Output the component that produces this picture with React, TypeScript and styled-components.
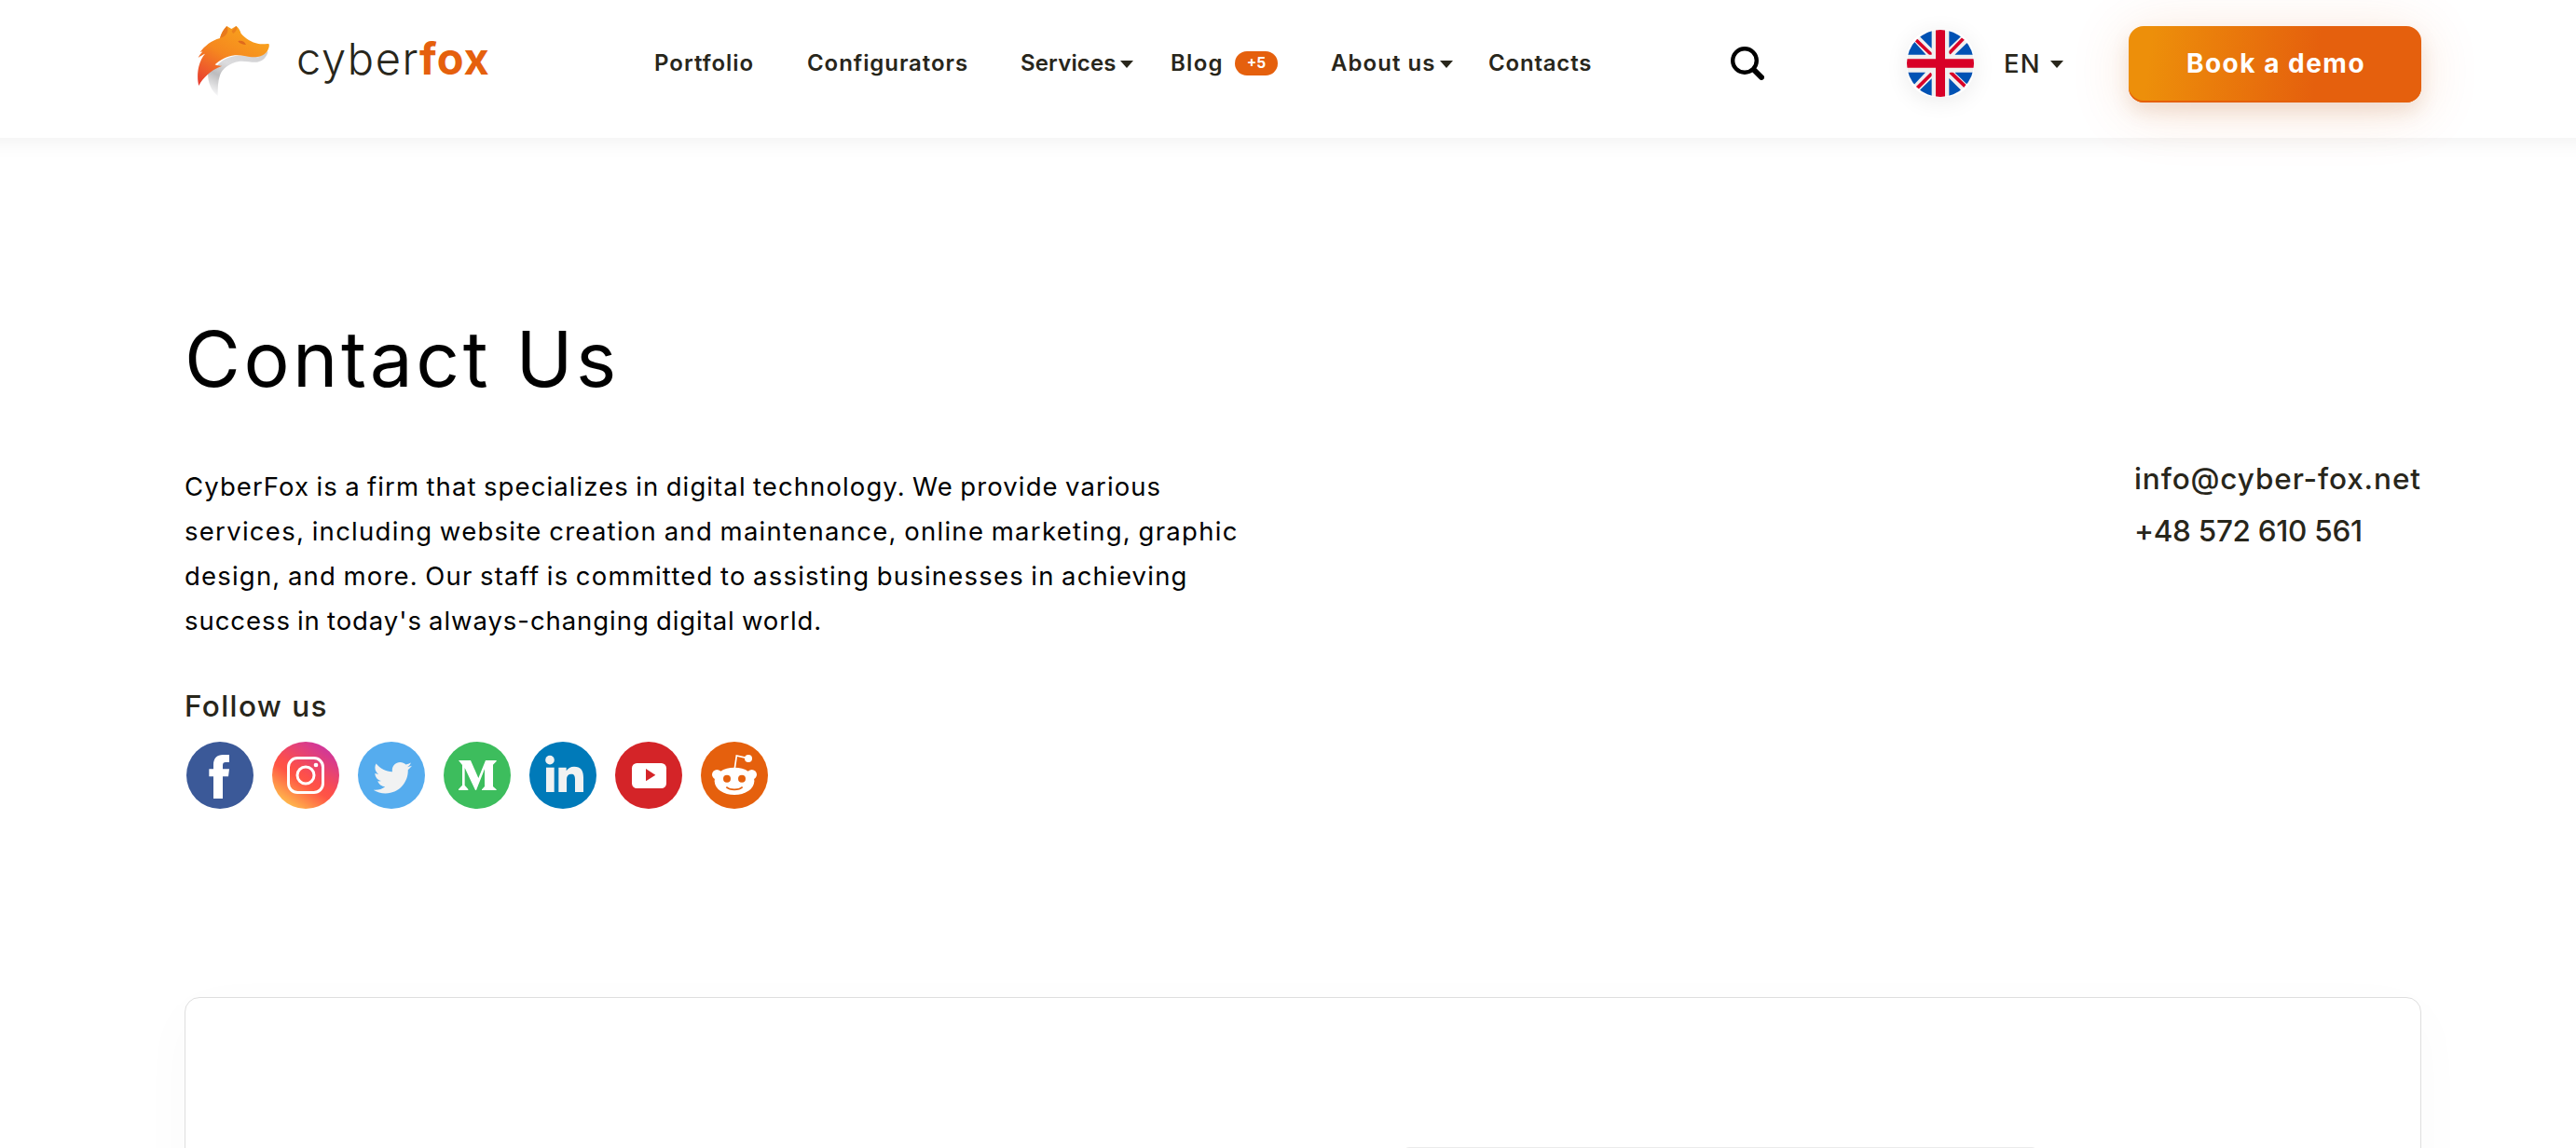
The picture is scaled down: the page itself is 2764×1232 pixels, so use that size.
import React from "react";
import styled, { createGlobalStyle } from "styled-components";
import { FaTwitter } from "react-icons/fa";

const GlobalStyle = createGlobalStyle`
  *, *::before, *::after { box-sizing: border-box; }
  body {
    margin: 0;
    background: #fff;
    color: #28261b;
    font-family: Inter, "Liberation Sans", sans-serif;
    overflow: hidden;
  }
`;

const Page = styled.div`
  height: 1232px;
  overflow: hidden;
`;

const Header = styled.header`
  height: 148px;
  margin: 0 -30px;
  padding: 0 196px 12px 240px;
  display: flex;
  align-items: center;
  box-shadow: 0 4px 20px rgba(0, 0, 0, 0.06);
`;

const Logo = styled.a`
  width: 492px;
  display: flex;
  align-items: center;
  gap: 28px;
  margin-top: -6px;
`;

const Wordmark = styled.span`
  margin-top: -4px;
  font-size: 47px;
  line-height: 60px;
  font-weight: 350;
  letter-spacing: 1.6px;
  white-space: nowrap;
`;

const WordmarkAccent = styled.b`
  font-weight: 700;
  color: #e5600d;
  letter-spacing: 0.9px;
`;

const Nav = styled.nav`
  width: 1155px;
  display: flex;
  align-items: center;
`;

const NavItem = styled.a<{ $width: number; $spacing: number }>`
  width: ${(p) => p.$width}px;
  display: flex;
  align-items: center;
  font-size: 24px;
  line-height: 30px;
  font-weight: 600;
  letter-spacing: ${(p) => p.$spacing}px;
  white-space: nowrap;
`;

const Caret = styled.i<{ $gap: number }>`
  margin-left: ${(p) => p.$gap}px;
  margin-top: 2px;
  border: 7px solid transparent;
  border-top: 8px solid #28261b;
  border-bottom: 0;
`;

const Badge = styled.span`
  width: 46px;
  height: 26px;
  margin-left: 12px;
  border-radius: 13px;
  display: flex;
  align-items: center;
  justify-content: center;
  background: #e5600d;
  color: #fff;
  font-size: 15.5px;
  line-height: 26px;
  font-weight: 700;
  letter-spacing: 0;
`;

const SearchButton = styled.button`
  width: 36px;
  height: 36px;
  padding: 0;
  border: 0;
  background: none;
  display: block;
`;

const Language = styled.div`
  margin-left: 153px;
  width: 238px;
  display: flex;
  align-items: center;
  font-size: 27.5px;
  line-height: 34px;
  font-weight: 500;
  letter-spacing: 1.1px;
`;

const FlagFrame = styled.span`
  width: 72px;
  height: 72px;
  margin-right: 32px;
  border-radius: 30px;
  background: #fff;
  box-shadow: 0 4px 24px rgba(0, 0, 0, 0.08);
  svg { display: block; }
`;

const DemoButton = styled.a`
  width: 314px;
  height: 82px;
  margin-top: 2px;
  border-radius: 16px;
  display: flex;
  align-items: center;
  justify-content: center;
  padding: 0 0 2px 2px;
  background: linear-gradient(97deg, #ed8f0a 8%, #e5600d 64%);
  box-shadow: inset 0 -2px 0 #e5600d, 0 10px 20px rgba(150, 75, 20, 0.13),
    0 8px 64px rgba(229, 96, 13, 0.16);
  color: #fff;
  font-size: 28px;
  line-height: 34px;
  font-weight: 700;
  letter-spacing: 1.5px;
  white-space: nowrap;
`;

const Main = styled.main`
  width: 2400px;
  margin-left: 198px;
`;

const Title = styled.h1`
  margin: 0;
  padding-top: 188px;
  font-size: 82px;
  line-height: 100px;
  font-weight: 400;
  letter-spacing: 3.5px;
  color: #000;
`;

const Intro = styled.section`
  display: flex;
  justify-content: space-between;
  align-items: flex-start;
`;

const About = styled.div`
  width: 1180px;
  padding-top: 62px;
`;

const Paragraph = styled.p`
  margin: 0;
  font-size: 27.5px;
  line-height: 48px;
  word-spacing: -1.5px;
  color: #000;
`;

const Line = styled.span<{ $spacing: number }>`
  display: block;
  white-space: nowrap;
  letter-spacing: ${(p) => p.$spacing}px;
`;

const FollowTitle = styled.h2`
  margin: 46px 0 0;
  font-size: 31.5px;
  line-height: 44px;
  font-weight: 500;
  letter-spacing: 1.4px;
`;

const SocialList = styled.div`
  margin: 16px 0 0 2px;
  display: flex;
  gap: 20px;
  svg { display: block; }
`;

const ContactList = styled.address`
  width: 308px;
  padding-top: 50px;
  font-style: normal;
  font-size: 31.5px;
  line-height: 56px;
  font-weight: 500;
`;

const ContactLine = styled.a<{ $spacing: number }>`
  display: block;
  white-space: nowrap;
  letter-spacing: ${(p) => p.$spacing}px;
`;

const FormCard = styled.section`
  height: 400px;
  margin-top: 202px;
  padding: 160px 409px 0 1305px;
  border: 1px solid #dedede;
  border-radius: 16px;
  background: #fff;
  box-shadow: 0 16px 64px rgba(0, 0, 0, 0.025);
`;

const Field = styled.div`
  height: 100px;
  border: 1px solid #ebebeb;
  border-radius: 8px;
`;

const FoxMark = () => (
  <svg width="80" height="78" viewBox="60 48 240 234">
    <defs>
      <linearGradient id="foxFur" x1="0.75" y1="0" x2="0.05" y2="1">
        <stop offset="0" stopColor="#f9a51c" />
        <stop offset="0.5" stopColor="#f5871f" />
        <stop offset="0.8" stopColor="#ee5a2c" />
        <stop offset="1" stopColor="#e63a2e" />
      </linearGradient>
      <linearGradient id="foxJaw" x1="0.9" y1="0" x2="0.2" y2="1">
        <stop offset="0" stopColor="#cfcfd1" />
        <stop offset="0.45" stopColor="#dcdcde" />
        <stop offset="0.7" stopColor="#bcbcbe" />
        <stop offset="1" stopColor="#f3f3f4" />
      </linearGradient>
    </defs>
    <path
      fill="url(#foxJaw)"
      d="M128 182C145 160 180 146 215 150L262 154L293 136C288 155 276 167 258 170C240 172 218 165 198 168C170 173 146 190 138 212C131 232 131 256 131 278C112 264 99 240 99 205Z"
    />
    <path
      fill="url(#foxFur)"
      d="M138 93C142 78 150 64 160 54L175 63L190 54C197 58 202 66 206 78C220 94 240 107 262 111C276 113 287 110 295 111C299 117 294 129 289 137C278 149 262 155 240 154C222 152 207 147 186 148C160 151 138 163 122 178C130 182 138 183 145 182C125 189 109 199 96 212C84 223 77 232 70 246C65 230 65 203 70 184C74 168 81 153 90 143C83 146 74 151 68 156C72 147 76 142 82 137C79 136 77 137 74 138C90 117 110 101 138 93Z"
    />
    <path fill="#e8791d" d="M138 93C142 78 150 64 160 54C166 66 163 80 150 88Z" />
    <path fill="#e8791d" opacity="0.8" d="M176 70L190 54C196 60 190 72 180 78Z" />
    <path fill="#df6a1c" d="M196 103C206 99 218 104 222 114C212 114 202 111 196 103Z" />
  </svg>
);

const UkFlag = () => (
  <svg width="72" height="72" viewBox="0 0 216 216">
    <defs>
      <clipPath id="flagRound">
        <circle cx="108" cy="108" r="108" />
      </clipPath>
    </defs>
    <g clipPath="url(#flagRound)">
      <rect width="216" height="216" fill="#f0f0f0" />
      <path
        fill="#0052b4"
        d="M80 0V60L42 22ZM24 38L62 80H0V38ZM136 0V58L174 22V0ZM216 80H154L196 40L216 40ZM0 137H60L22 178H0ZM80 157V216H40V196ZM136 156V216H176V196ZM154 137H216V178H196Z"
      />
      <path
        stroke="#d80027"
        strokeWidth="11"
        d="M27 30L80 81M183 27L136 76M33 188L80 141M190 184L140 136"
      />
      <path fill="#f0f0f0" d="M80 60H136V156H80ZM60 80H156V137H60Z" />
      <path fill="#d80027" d="M93 0H123V94H216V122H123V216H93V122H0V94H93Z" />
    </g>
  </svg>
);

const SearchIcon = () => (
  <svg width="36" height="36" viewBox="0 0 36 36" fill="none" stroke="#000" strokeLinecap="round">
    <circle cx="15" cy="15" r="12.8" strokeWidth="4.4" />
    <path d="M25.5 25.5L33 33" strokeWidth="6" />
  </svg>
);

const Disc = ({ fill, children }: { fill: string; children: React.ReactNode }) => (
  <svg width="72" height="72" viewBox="0 0 216 216">
    <circle cx="108" cy="108" r="108" fill={fill} />
    {children}
  </svg>
);

const Facebook = () => (
  <Disc fill="#3b5998">
    <path
      fill="#fff"
      d="M138 42H118C98 42 87 54 87 74V88H73V112H87V183H117V112H135L138 88H117V76C117 69 120 66 126 66H138Z"
    />
  </Disc>
);

const Instagram = () => (
  <Disc fill="url(#instaGlow)">
    <defs>
      <linearGradient id="instaGlow" x1="0.2" y1="0.95" x2="0.8" y2="0.05">
        <stop offset="0" stopColor="#ffc04d" />
        <stop offset="0.4" stopColor="#ff5545" />
        <stop offset="0.5" stopColor="#fd4f4b" />
        <stop offset="1" stopColor="#cd359f" />
      </linearGradient>
    </defs>
    <g fill="none" stroke="#fff">
      <rect x="52.5" y="52.5" width="111" height="111" rx="29" strokeWidth="9" />
      <circle cx="108" cy="108" r="27" strokeWidth="9" />
    </g>
    <circle cx="141" cy="75" r="7" fill="#fff" />
  </Disc>
);

const Twitter = () => (
  <Disc fill="#55acee">
    <FaTwitter x="50" y="54" size={124} color="#f1f2f2" />
  </Disc>
);

const Medium = () => (
  <Disc fill="#3dbd5d">
    <path
      fill="#fff"
      d="M48 60H87L112 117L135 60H170V63L159 74V144L170 154V156H123V154L132 144V88L105 156H102L68 84V140L79 153V156H48V153L60 140V75Z"
    />
  </Disc>
);

const LinkedIn = () => (
  <Disc fill="#007ab9">
    <g fill="#f1f2f2">
      <circle cx="66" cy="59" r="14.5" />
      <rect x="54" y="83" width="26" height="79" />
      <path d="M94 83H119V94C124 85 133 80 144 80C166 80 174 93 174 115V162H147V121C147 110 144 104 135 104C125 104 120 110 120 121V162H94Z" />
    </g>
  </Disc>
);

const YouTube = () => (
  <Disc fill="#d42428">
    <rect x="54" y="69" width="111" height="81" rx="16" fill="#fff" />
    <path fill="#d42428" d="M99 87L130 107L99 127Z" />
  </Disc>
);

const Reddit = () => (
  <Disc fill="#e5600d">
    <path d="M109 86L115 45L150 53" fill="none" stroke="#fff" strokeWidth="5" />
    <g fill="#fff">
      <circle cx="153" cy="54" r="12" />
      <circle cx="52" cy="106" r="16" />
      <circle cx="164" cy="106" r="16" />
      <ellipse cx="108" cy="127" rx="64" ry="44" />
    </g>
    <g fill="#e5600d">
      <circle cx="84" cy="119" r="12" />
      <circle cx="132" cy="119" r="12" />
    </g>
    <path d="M82 146C94 157 122 157 134 146" fill="none" stroke="#e5600d" strokeWidth="5" />
  </Disc>
);

export default function App() {
  return (
    <Page>
      <GlobalStyle />
      <Header>
        <Logo>
          <FoxMark />
          <Wordmark>
            cyber<WordmarkAccent>fox</WordmarkAccent>
          </Wordmark>
        </Logo>
        <Nav>
          <NavItem $width={164} $spacing={1}>Portfolio</NavItem>
          <NavItem $width={229} $spacing={0.92}>Configurators</NavItem>
          <NavItem $width={161} $spacing={0.15}>
            Services
            <Caret $gap={4} />
          </NavItem>
          <NavItem $width={172} $spacing={1.3}>
            Blog
            <Badge>+5</Badge>
          </NavItem>
          <NavItem $width={169} $spacing={1.04}>
            About us
            <Caret $gap={5} />
          </NavItem>
          <NavItem $width={120} $spacing={0.8}>Contacts</NavItem>
        </Nav>
        <SearchButton>
          <SearchIcon />
        </SearchButton>
        <Language>
          <FlagFrame>
            <UkFlag />
          </FlagFrame>
          EN
          <Caret $gap={10} />
        </Language>
        <DemoButton>Book a demo</DemoButton>
      </Header>
      <Main>
        <Title>Contact Us</Title>
        <Intro>
          <About>
            <Paragraph>
              <Line $spacing={1.1}>CyberFox is a firm that specializes in digital technology. We provide various</Line>
              <Line $spacing={1.28}>services, including website creation and maintenance, online marketing, graphic</Line>
              <Line $spacing={1.2}>design, and more. Our staff is committed to assisting businesses in achieving</Line>
              <Line $spacing={0.94}>success in today's always-changing digital world.</Line>
            </Paragraph>
            <FollowTitle>Follow us</FollowTitle>
            <SocialList>
              <Facebook />
              <Instagram />
              <Twitter />
              <Medium />
              <LinkedIn />
              <YouTube />
              <Reddit />
            </SocialList>
          </About>
          <ContactList>
            <ContactLine $spacing={0.88}>info@cyber-fox.net</ContactLine>
            <ContactLine $spacing={-0.3}>+48 572 610 561</ContactLine>
          </ContactList>
        </Intro>
        <FormCard>
          <Field />
        </FormCard>
      </Main>
    </Page>
  );
}
